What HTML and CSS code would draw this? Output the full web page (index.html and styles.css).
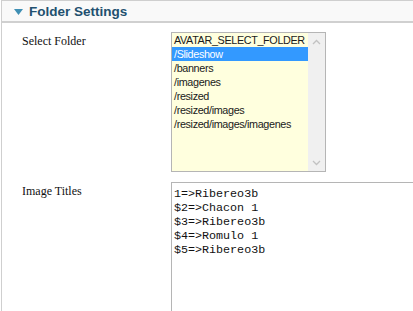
FILE: index.html
```html
<!DOCTYPE html>
<html>
<head>
<meta charset="utf-8">
<link rel="stylesheet" href="styles.css">
</head>
<body>
<div class="panel">
  <div class="panel-head">
    <svg class="caret" width="9" height="6" viewBox="0 0 9 6"><polygon points="0,0 9,0 4.5,6" fill="#3f8fb4"/></svg>
    <span class="title">Folder Settings</span>
  </div>
  <div class="panel-body">
    <div class="row">
      <div class="label">Select Folder</div>
      <div class="listbox">
        <ul class="options">
          <li>AVATAR_SELECT_FOLDER</li>
          <li class="sel">/Slideshow</li>
          <li>/banners</li>
          <li>/imagenes</li>
          <li>/resized</li>
          <li>/resized/images</li>
          <li>/resized/images/imagenes</li>
        </ul>
        <div class="scrollbar">
          <svg width="9" height="6" viewBox="0 0 9 6"><polyline points="1,5 4.5,1.5 8,5" fill="none" stroke="#c2c2c2" stroke-width="1.3"/></svg>
          <svg width="9" height="6" viewBox="0 0 9 6"><polyline points="1,1 4.5,4.5 8,1" fill="none" stroke="#c2c2c2" stroke-width="1.3"/></svg>
        </div>
      </div>
    </div>
    <div class="row row2">
      <div class="label">Image Titles</div>
      <div class="textarea">1=&gt;Ribereo3b
$2=&gt;Chacon 1
$3=&gt;Ribereo3b
$4=&gt;Romulo 1
$5=&gt;Ribereo3b</div>
    </div>
  </div>
</div>
</body>
</html>
```
FILE: styles.css
```css
html, body {
  margin: 0;
  padding: 0;
  background: #ffffff;
  overflow: hidden;
}
.panel {
  margin-left: 1px;
  height: 311px;
  box-sizing: border-box;
  border-left: 1px solid #cfcfcf;
  border-top: 1px solid #cfcfcf;
}
.panel-head {
  background: #f9f9f9;
  border-bottom: 2px solid #d0d0d0;
  display: flex;
  align-items: center;
  padding-left: 12px;
  box-sizing: border-box;
  height: 22px;
}
.caret {
  margin-right: 6px;
  margin-top: 1px;
}
.title {
  font-family: "Liberation Sans", Arial, sans-serif;
  font-weight: bold;
  font-size: 13.5px;
  color: #22506f;
}
.panel-body {
  padding-top: 9px;
}
.row {
  display: flex;
  align-items: flex-start;
}
.row2 {
  margin-top: 10px;
}
.label {
  width: 169px;
  padding-left: 20px;
  box-sizing: border-box;
  font-family: "Liberation Serif", "Times New Roman", serif;
  font-size: 12px;
  color: #111;
  padding-top: 2px;
}
.listbox {
  width: 155px;
  height: 140px;
  border: 1px solid #b5b5b5;
  background: #ffffde;
  display: flex;
  box-sizing: border-box;
}
.options {
  list-style: none;
  margin: 0;
  padding: 0;
  flex: 1;
  font-family: "Liberation Sans", Arial, sans-serif;
  font-size: 10.8px;
  color: #1a1a1a;
}
.options li {
  height: 14px;
  line-height: 14px;
  padding-left: 2px;
  white-space: nowrap;
  letter-spacing: -0.35px;
}
.options li.sel {
  background: #3399ff;
  color: #ffffff;
}
.scrollbar {
  width: 17px;
  background: #f0f0f0;
  display: flex;
  flex-direction: column;
  justify-content: space-between;
  align-items: center;
  padding: 6px 0 5px;
  box-sizing: border-box;
}
.textarea {
  flex: 1;
  height: 140px;
  border: 1px solid #b5b5b5;
  border-right: none;
  border-bottom: none;
  box-sizing: border-box;
  white-space: pre;
  font-family: "Liberation Mono", "Courier New", monospace;
  font-size: 11.7px;
  line-height: 14px;
  color: #111;
  padding: 4px 2px 3px;
}
```
